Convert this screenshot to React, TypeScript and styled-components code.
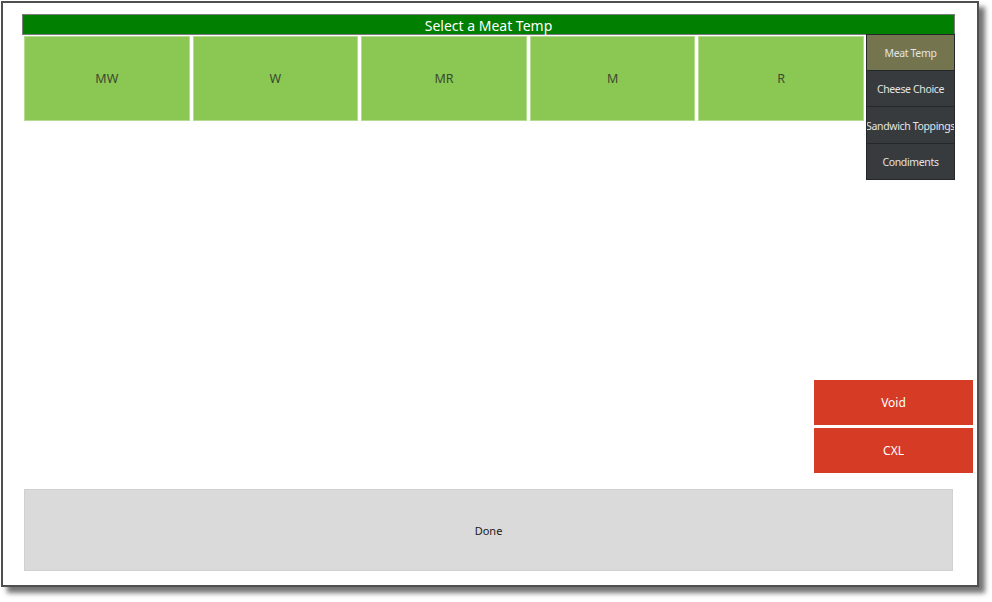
import styled, { createGlobalStyle } from 'styled-components';

const GlobalStyle = createGlobalStyle`
  html, body {
    margin: 0;
    min-height: 100vh;
    background: #ffffff;
    font-family: 'Noto Sans', 'Open Sans', sans-serif;
  }
`;

const TEMPS = ['MW', 'W', 'MR', 'M', 'R'];
const GROUPS = ['Meat Temp', 'Cheese Choice', 'Sandwich Toppings', 'Condiments'];

const App = () => {
  const activeGroup = 'Meat Temp';

  return (
    <>
      <GlobalStyle />
      <Page>
        <Frame>
          <Header>Select a Meat Temp</Header>
          <TopRow>
            <TempGrid>
              {TEMPS.map((temp) => (
                <TempTile key={temp}>{temp}</TempTile>
              ))}
            </TempGrid>
            <GroupNav>
              {GROUPS.map((group) => (
                <GroupButton key={group} active={group === activeGroup}>
                  {group}
                </GroupButton>
              ))}
            </GroupNav>
          </TopRow>
          <Spacer />
          <Actions>
            <ActionButton>Void</ActionButton>
            <ActionButton>CXL</ActionButton>
          </Actions>
          <DoneButton>Done</DoneButton>
        </Frame>
      </Page>
    </>
  );
};

const Page = styled.div`
  width: 992px;
  height: 602px;
  padding: 1px 0 0 1px;
  box-sizing: border-box;
`;

const Frame = styled.div`
  box-sizing: border-box;
  display: flex;
  flex-direction: column;
  width: 978px;
  height: 586px;
  padding: 11px 0 0 19px;
  background: #ffffff;
  border: 2px solid #4f4f4f;
  box-shadow: 6px 6px 5px rgba(0, 0, 0, 0.55);
`;

const Header = styled.div`
  box-sizing: border-box;
  width: 933px;
  height: 21px;
  display: flex;
  align-items: center;
  justify-content: center;
  padding-top: 2px;
  background: #007f00;
  border: 1px solid #7c7c7c;
  color: #ffffff;
  font-size: 14px;
  line-height: 1;
`;

const TopRow = styled.div`
  display: flex;
  align-items: flex-start;
  margin-left: 2px;
`;

const TempGrid = styled.div`
  display: grid;
  grid-template-columns: repeat(5, 1fr);
  gap: 3px;
  width: 840px;
  margin-top: 1px;
`;

const TempTile = styled.div`
  box-sizing: border-box;
  height: 85px;
  display: flex;
  align-items: center;
  justify-content: center;
  background: #8bc853;
  border: 1px solid #b4dc90;
  color: #3a4a30;
  font-size: 12.5px;
`;

const GroupNav = styled.div`
  display: flex;
  flex-direction: column;
  width: 89px;
  margin-left: 2px;
  margin-top: -1px;
`;

const GroupButton = styled.div<{ active: boolean }>`
  box-sizing: border-box;
  height: 36.5px;
  display: flex;
  align-items: center;
  justify-content: center;
  padding-top: 2px;
  background: ${({ active }) => (active ? '#74754f' : '#373b3e')};
  border: 1px solid #25282a;
  border-top-width: 0;
  &:first-child {
    border-top-width: 1px;
  }
  color: #e4e4e4;
  font-size: 10.5px;
  white-space: nowrap;
  letter-spacing: -0.35px;
  overflow: hidden;
`;

const Spacer = styled.div`
  flex: 1;
`;

const Actions = styled.div`
  display: flex;
  flex-direction: column;
  gap: 3px;
  align-self: flex-end;
  margin-right: 4px;
`;

const ActionButton = styled.div`
  box-sizing: border-box;
  width: 159px;
  height: 45px;
  display: flex;
  align-items: center;
  justify-content: center;
  background: #d63b25;
  color: #ffffff;
  font-size: 12px;
`;

const DoneButton = styled.div`
  box-sizing: border-box;
  width: 929px;
  height: 82px;
  margin: 16px 0 14px 2px;
  display: flex;
  align-items: center;
  justify-content: center;
  background: #dadada;
  border: 1px solid #d0d0d0;
  color: #1a1a1a;
  font-size: 11px;
`;

export default App;
